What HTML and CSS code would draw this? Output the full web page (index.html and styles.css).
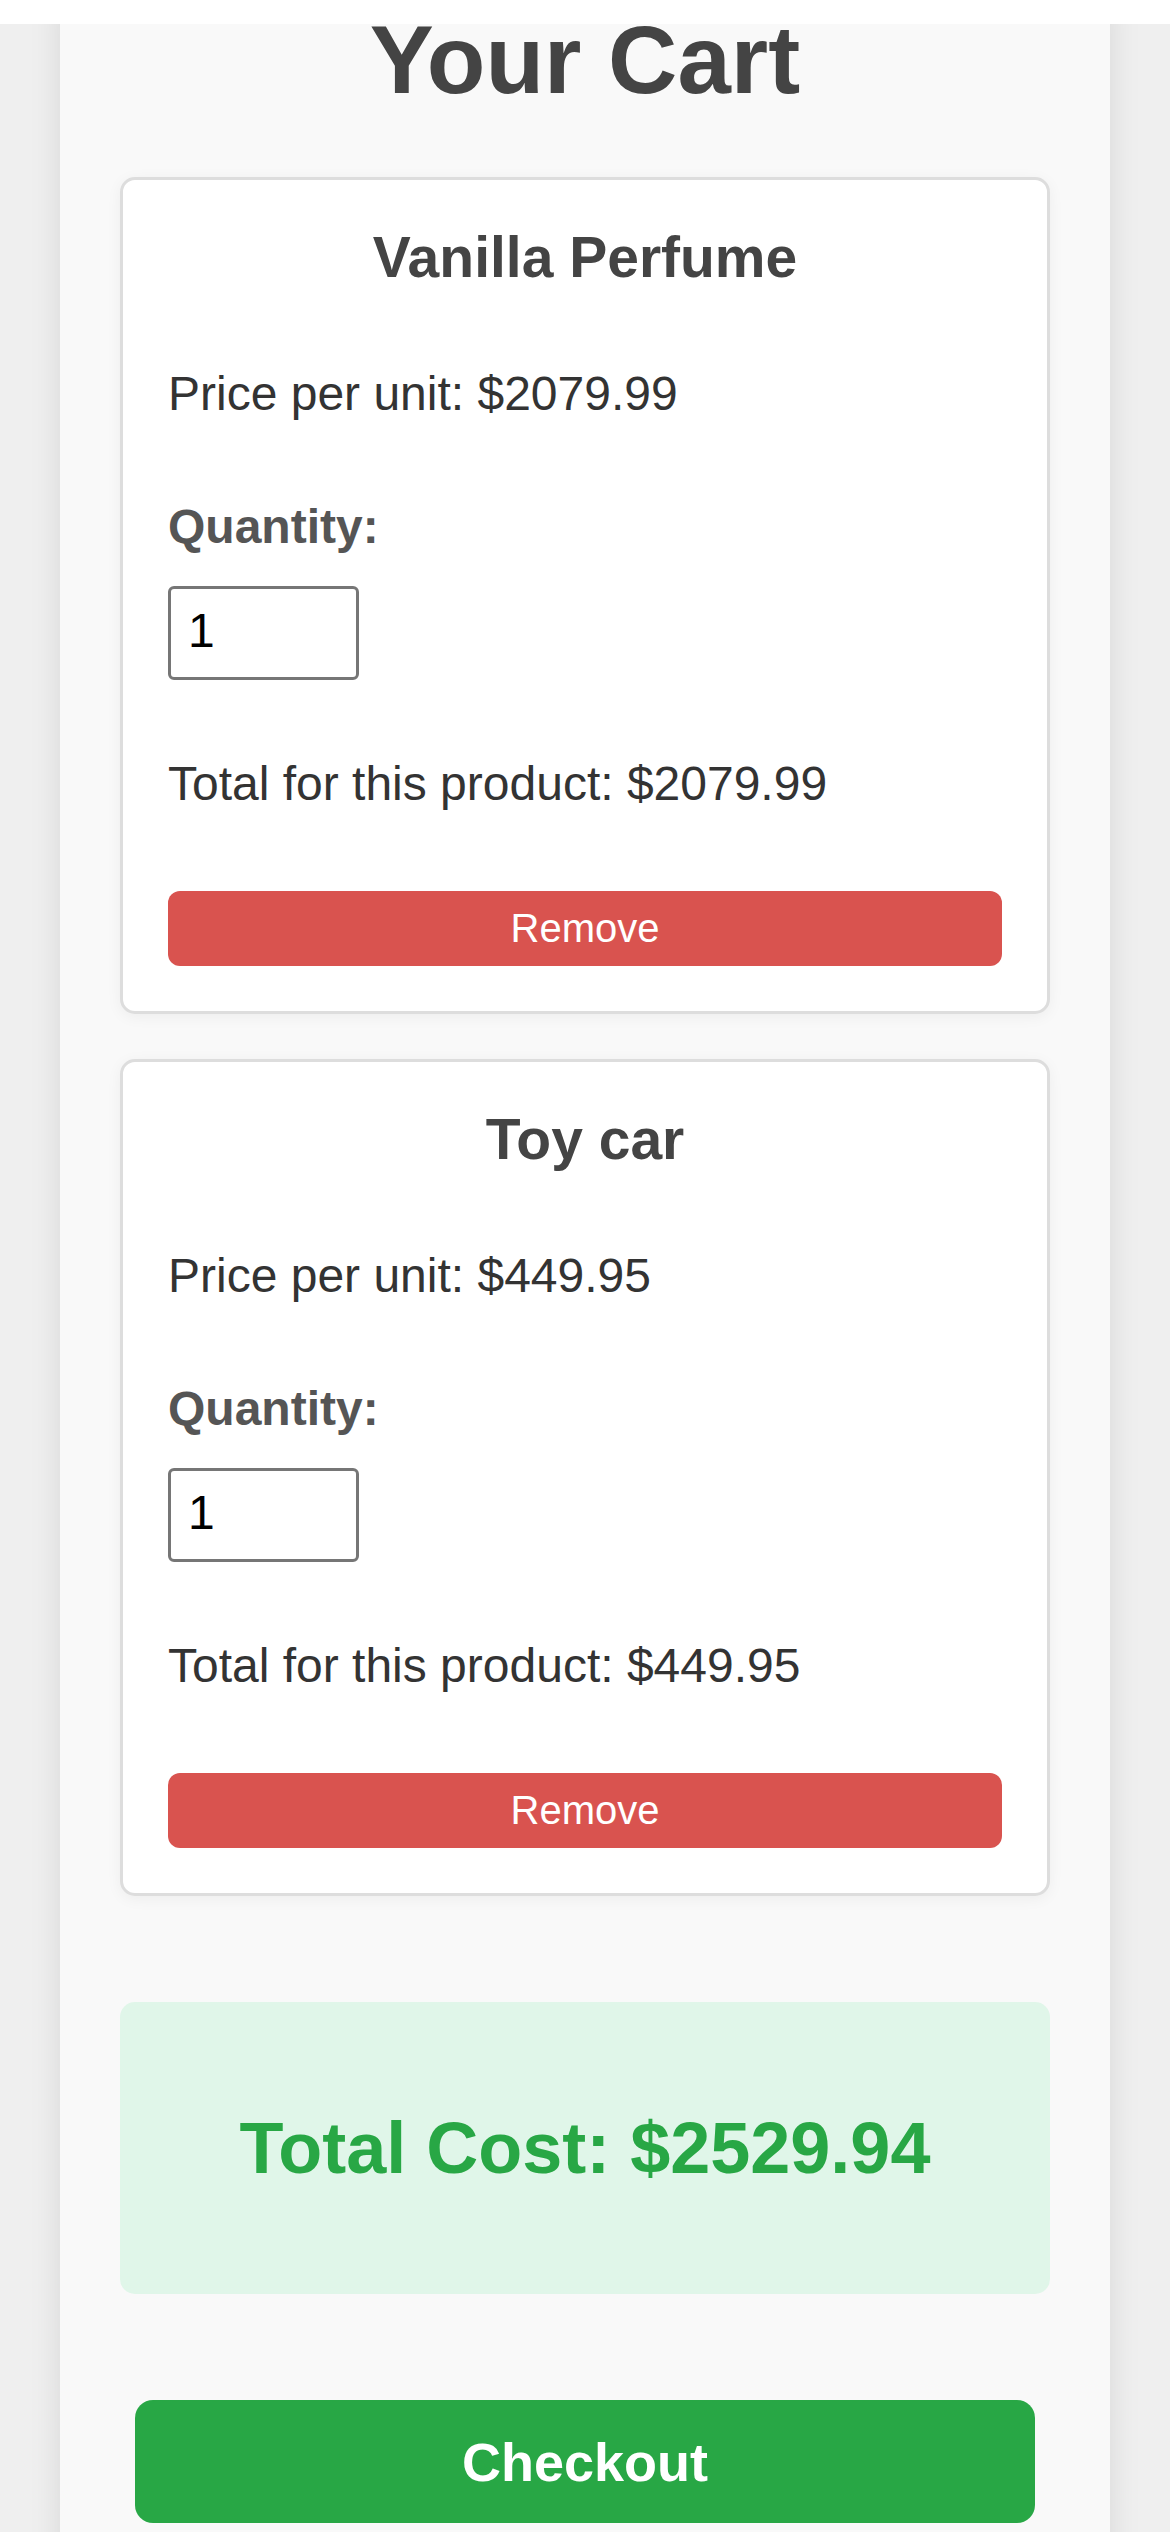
FILE: index.html
```html
<!DOCTYPE html>
<html lang="en">
<head>
<meta charset="utf-8">
<title>Your Cart</title>
<link rel="stylesheet" href="styles.css">
</head>
<body>
<div class="topbar"></div>
<main class="container">
  <h1 class="title">Your Cart</h1>

  <section class="cart-item">
    <h3 class="item-name">Vanilla Perfume</h3>
    <p class="item-price">Price per unit: $2079.99</p>
    <label class="qty-label" for="q1">Quantity:</label>
    <input class="qty-input" id="q1" type="text" value="1">
    <p class="item-total">Total for this product: $2079.99</p>
    <button class="remove-btn" type="button">Remove</button>
  </section>

  <section class="cart-item">
    <h3 class="item-name">Toy car</h3>
    <p class="item-price">Price per unit: $449.95</p>
    <label class="qty-label" for="q2">Quantity:</label>
    <input class="qty-input" id="q2" type="text" value="1">
    <p class="item-total">Total for this product: $449.95</p>
    <button class="remove-btn" type="button">Remove</button>
  </section>

  <div class="total-box">
    <h2 class="total-text">Total Cost: $2529.94</h2>
  </div>

  <button class="checkout-btn" type="button">Checkout</button>
</main>
</body>
</html>
```

FILE: styles.css
```css
* {
  box-sizing: border-box;
}

html, body {
  margin: 0;
  padding: 0;
}

body {
  background: #efefef;
  font-family: "Liberation Sans", Arial, sans-serif;
  color: #333;
}

.topbar {
  position: fixed;
  top: 0;
  left: 0;
  right: 0;
  height: 24px;
  background: #ffffff;
  z-index: 10;
}

.container {
  width: 1050px;
  margin: 0 auto;
  background: #f9f9f9;
  padding: 5px 60px 80px;
  box-shadow: 0 0 30px rgba(0, 0, 0, 0.1);
  display: flex;
  flex-direction: column;
}

.title {
  margin: 0 0 62px;
  font-size: 96px;
  line-height: 110px;
  font-weight: 700;
  color: #444;
  text-align: center;
}

.cart-item {
  background: #ffffff;
  border: 3px solid #dddddd;
  border-radius: 15px;
  padding: 45px;
  margin-bottom: 45px;
  box-shadow: 0 3px 15px rgba(0, 0, 0, 0.05);
  display: flex;
  flex-direction: column;
  align-items: flex-start;
}

.item-name {
  align-self: stretch;
  margin: 0;
  font-size: 57px;
  line-height: 64px;
  font-weight: 700;
  color: #444;
  text-align: center;
}

.item-price {
  margin: 77px 0 0;
  font-size: 48px;
  line-height: 55px;
  color: #333;
}

.qty-label {
  display: block;
  margin-top: 78px;
  font-size: 48px;
  line-height: 55px;
  font-weight: 700;
  color: #555;
}

.qty-input {
  margin-top: 32px;
  width: 191px;
  height: 94px;
  padding: 0 0 6px 17px;
  border: 3px solid #767676;
  border-radius: 6px;
  background: #fff;
  font-family: "Liberation Sans", Arial, sans-serif;
  font-size: 48px;
  color: #000;
  outline: none;
}

.item-total {
  margin: 76px 0 0;
  font-size: 48px;
  line-height: 55px;
  color: #333;
}

.remove-btn {
  align-self: stretch;
  margin-top: 80px;
  height: 75px;
  border: none;
  border-radius: 12px;
  background: #d9534f;
  color: #fff;
  font-family: "Liberation Sans", Arial, sans-serif;
  font-size: 40px;
  padding: 0;
}

.total-box {
  margin-top: 61px;
  height: 292px;
  background: #e0f6e9;
  border-radius: 15px;
  display: flex;
  align-items: center;
  justify-content: center;
}

.total-text {
  margin: 0;
  font-size: 72px;
  line-height: 83px;
  font-weight: 700;
  color: #28a745;
}

.checkout-btn {
  align-self: center;
  margin-top: 106px;
  width: 900px;
  height: 123px;
  border: none;
  border-radius: 18px;
  background: #28a745;
  color: #fff;
  font-family: "Liberation Sans", Arial, sans-serif;
  font-size: 54px;
  font-weight: 700;
  padding: 0;
}
```
